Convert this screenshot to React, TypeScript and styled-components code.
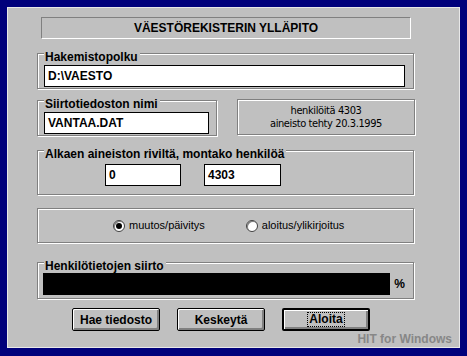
import styled, { createGlobalStyle } from "styled-components";

const GlobalStyle = createGlobalStyle`
  html, body {
    margin: 0;
    padding: 0;
    background: #00007b;
  }
  body {
    font-family: "Liberation Sans", Arial, sans-serif;
    color: #000;
  }
`;

const Window = styled.div`
  box-sizing: border-box;
  width: 467px;
  height: 356px;
  background: #00007b;
  padding: 7px 7px 8px 7px;
`;

const Panel = styled.div`
  box-sizing: border-box;
  height: 100%;
  background: #c0c0c0;
  border: 1px solid #e8e8e8;
  display: flex;
  flex-direction: column;
  align-items: flex-start;
  padding: 9px 0 0 29px;
`;

const Title = styled.div`
  box-sizing: border-box;
  width: 370px;
  height: 22px;
  margin-left: 4px;
  border-top: 1px solid #808080;
  border-left: 1px solid #808080;
  border-bottom: 1px solid #fff;
  border-right: 1px solid #fff;
  font-size: 12px;
  font-weight: bold;
  line-height: 20px;
  text-align: center;
`;

const Group = styled.div<{ $w?: number; $mt?: number }>`
  box-sizing: border-box;
  width: ${(p) => p.$w ?? 377}px;
  margin-top: ${(p) => p.$mt ?? 0}px;
  border: 1px solid #808080;
  box-shadow: 1px 1px 0 #fff, inset 1px 1px 0 #fff;
  padding: 0 8px 1px 6px;
`;

const Legend = styled.div`
  width: fit-content;
  margin-top: -3px;
  padding: 0 2px 0 1px;
  background: #c0c0c0;
  font-size: 12px;
  font-weight: bold;
  line-height: 13px;
  white-space: nowrap;
`;

const Field = styled.div<{ $w: number; $mt?: number }>`
  box-sizing: border-box;
  width: ${(p) => p.$w}px;
  height: 22px;
  margin-top: ${(p) => p.$mt ?? 1}px;
  background: #fff;
  border: 1px solid #000;
  padding-left: 3px;
  font-size: 12px;
  font-weight: bold;
  line-height: 20px;
`;

const Row = styled.div<{ $mt?: number }>`
  display: flex;
  align-items: flex-start;
  gap: 20px;
  margin-top: ${(p) => p.$mt ?? 0}px;
`;

const InfoBox = styled.div`
  box-sizing: border-box;
  width: 178px;
  height: 36px;
  margin-top: -1px;
  border: 1px solid #808080;
  box-shadow: 1px 1px 0 #fff, inset 1px 1px 0 #fff;
  display: flex;
  flex-direction: column;
  align-items: center;
  justify-content: center;
  font-family: "Liberation Sans Narrow", "DejaVu Sans Condensed", "Liberation Sans", sans-serif;
  font-size: 11px;
  letter-spacing: -0.4px;
  line-height: 13px;
`;

const FieldRow = styled.div`
  display: flex;
  gap: 23px;
  margin: 3px 0 7px 61px;
`;

const RadioBox = styled.div`
  box-sizing: border-box;
  width: 377px;
  height: 35px;
  margin-top: 13px;
  border: 1px solid #808080;
  box-shadow: 1px 1px 0 #fff, inset 1px 1px 0 #fff;
  display: flex;
  align-items: center;
  padding-left: 75px;
  gap: 41px;
`;

const RadioItem = styled.label`
  display: flex;
  align-items: center;
  gap: 4px;
  font-size: 11px;
  line-height: 13px;
`;

const RadioDot = styled.span<{ $on?: boolean }>`
  box-sizing: border-box;
  width: 12px;
  height: 12px;
  border-radius: 50%;
  border: 1px solid #404040;
  background: #fff;
  box-shadow: inset 1px 1px 0 #808080;
  display: flex;
  align-items: center;
  justify-content: center;
  &::after {
    content: "";
    width: 6px;
    height: 6px;
    border-radius: 50%;
    background: ${(p) => (p.$on ? "#000" : "transparent")};
  }
`;

const BarRow = styled.div`
  display: flex;
  align-items: center;
  gap: 4px;
  margin: 0 0 2px -1px;
`;

const Bar = styled.div`
  width: 349px;
  height: 22px;
  background: #000;
`;

const Percent = styled.span`
  font-size: 12px;
  font-weight: bold;
`;

const Buttons = styled.div`
  display: flex;
  gap: 17px;
  margin: 9px 0 0 35px;
`;

const Button = styled.button<{ $default?: boolean }>`
  box-sizing: border-box;
  width: 88px;
  height: 23px;
  padding: 0;
  border: ${(p) => (p.$default ? 2 : 1)}px solid #000;
  border-radius: 2px;
  background: #c0c0c0;
  box-shadow: inset 1px 1px 0 #fff, inset -2px -2px 0 #808080;
  font-family: "Liberation Sans", Arial, sans-serif;
  font-size: 12px;
  font-weight: bold;
  color: #000;
  display: flex;
  align-items: center;
  justify-content: center;
`;

const FocusRect = styled.span`
  border: 1px dotted #000;
  padding: 0 1px;
  line-height: 13px;
`;

const Brand = styled.div`
  align-self: flex-end;
  margin: 2px 7px 0 0;
  font-size: 12px;
  font-weight: bold;
  line-height: 13px;
  color: #878787;
`;

export default function App() {
  return (
    <Window>
      <GlobalStyle />
      <Panel>
        <Title>VÄESTÖREKISTERIN YLLÄPITO</Title>

        <Group $mt={14}>
          <Legend>Hakemistopolku</Legend>
          <Field $w={361}>D:\VAESTO</Field>
        </Group>

        <Row $mt={11}>
          <Group $w={180}>
            <Legend>Siirtotiedoston nimi</Legend>
            <Field $w={165}>VANTAA.DAT</Field>
          </Group>
          <InfoBox>
            <span>henkilöitä 4303</span>
            <span>aineisto tehty 20.3.1995</span>
          </InfoBox>
        </Row>

        <Group $mt={14}>
          <Legend>Alkaen aineiston riviltä, montako henkilöä</Legend>
          <FieldRow>
            <Field $w={76} $mt={0}>0</Field>
            <Field $w={77} $mt={0}>4303</Field>
          </FieldRow>
        </Group>

        <RadioBox>
          <RadioItem>
            <RadioDot $on />
            muutos/päivitys
          </RadioItem>
          <RadioItem>
            <RadioDot />
            aloitus/ylikirjoitus
          </RadioItem>
        </RadioBox>

        <Group $mt={19}>
          <Legend>Henkilötietojen siirto</Legend>
          <BarRow>
            <Bar />
            <Percent>%</Percent>
          </BarRow>
        </Group>

        <Buttons>
          <Button>Hae tiedosto</Button>
          <Button>Keskeytä</Button>
          <Button $default>
            <FocusRect>Aloita</FocusRect>
          </Button>
        </Buttons>

        <Brand>HIT for Windows</Brand>
      </Panel>
    </Window>
  );
}
